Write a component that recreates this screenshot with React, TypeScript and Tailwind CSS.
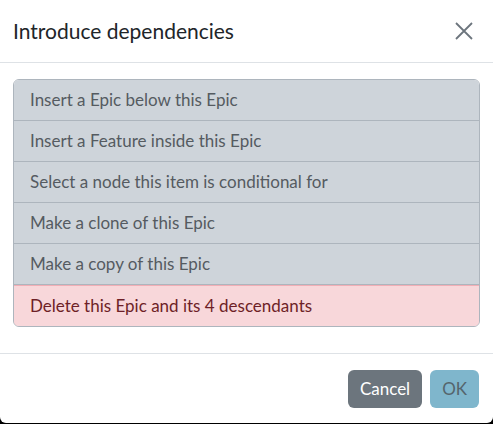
import React from 'react';

const items = [
  'Insert a Epic below this Epic',
  'Insert a Feature inside this Epic',
  'Select a node this item is conditional for',
  'Make a clone of this Epic',
  'Make a copy of this Epic',
];

const App = () => {
  return (
    <div className="h-[424px] w-[493px] overflow-hidden bg-black font-['Lato',sans-serif]">
      <div className="flex h-[423px] flex-col rounded-b-md bg-white">
        <div className="flex h-[63px] items-center justify-between border-b border-[#dee2e6] pl-[13px] pr-[14px]">
          <h5 className="text-[21px] leading-[30px] text-[#212529]">Introduce dependencies</h5>
          <button className="flex h-[30px] w-[30px] items-center justify-center text-[#6c757d]">
            <svg width="18" height="18" viewBox="0 0 18 18" fill="none" stroke="currentColor" strokeWidth="1.8">
              <path d="M1 1L17 17M17 1L1 17" />
            </svg>
          </button>
        </div>
        <div className="px-[13px] pt-4 pb-[26px]">
          <ul className="overflow-hidden rounded-md border border-[#adb5bd]">
            {items.map((text) => (
              <li
                key={text}
                className="border-b border-[#adb5bd] bg-[#ced4da] px-4 py-2 text-[17px] leading-6 text-[#555b61]"
              >
                {text}
              </li>
            ))}
            <li className="-mb-px -mx-px border border-[#f1aeb5] rounded-b-md bg-[#f8d7da] px-4 py-2 text-[17px] leading-6 text-[#6e1f27]">
              Delete this Epic and its 4 descendants
            </li>
          </ul>
        </div>
        <div className="flex flex-1 items-center justify-end gap-2 border-t border-[#dee2e6] pr-[14px]">
          <button className="h-[38px] rounded-md bg-[#6c757d] px-3 text-[17px] text-white">Cancel</button>
          <button className="h-[38px] rounded-md bg-[#7fb6cc] px-3 text-[17px] text-[#55656c]">OK</button>
        </div>
      </div>
    </div>
  );
};

export default App;
